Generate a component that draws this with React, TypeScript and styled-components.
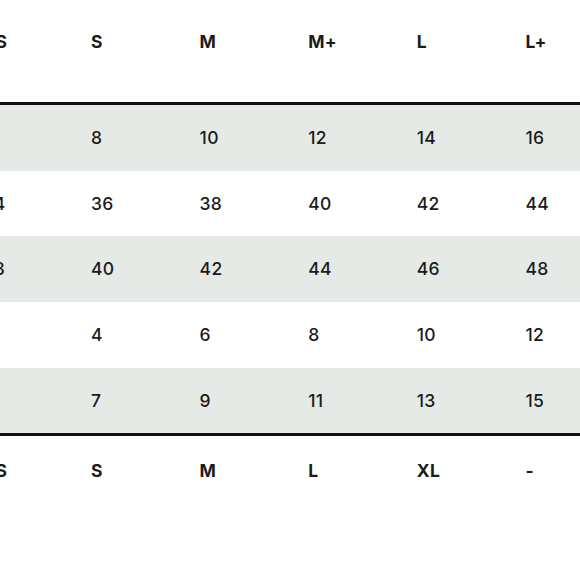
import styled, { createGlobalStyle } from 'styled-components';

const GlobalStyle = createGlobalStyle`
  html, body {
    margin: 0;
    padding: 0;
    background: #ffffff;
    overflow: hidden;
  }
  body {
    font-family: Inter, "Noto Sans", "Liberation Sans", sans-serif;
    color: #1b1b1b;
  }
`;

const Chart = styled.div`
  width: 652px;
  margin-left: -17.6px;
  display: flex;
  flex-direction: column;
`;

const Row = styled.div<{ $shade?: boolean; $rule?: boolean }>`
  display: grid;
  grid-template-columns: repeat(6, 108.6px);
  height: 65.7px;
  align-items: center;
  background: ${(p) => (p.$shade ? '#e6eae7' : '#ffffff')};
  border-bottom: ${(p) => (p.$rule ? '3px solid #111111' : 'none')};
`;

const HeadRow = styled(Row)`
  height: 105px;
  align-items: start;
  padding-top: 31px;
  box-sizing: border-box;
`;

const FootRow = styled(Row)`
  padding-top: 4px;
  box-sizing: border-box;
`;

const Cell = styled.div<{ $bold?: boolean }>`
  font-size: 17.5px;
  line-height: 22px;
  font-weight: ${(p) => (p.$bold ? 700 : 500)};
  letter-spacing: 0.3px;
`;

const sizes = ['XS', 'S', 'M', 'M+', 'L', 'L+'];
const rows = [
  ['6', '8', '10', '12', '14', '16'],
  ['34', '36', '38', '40', '42', '44'],
  ['38', '40', '42', '44', '46', '48'],
  ['2', '4', '6', '8', '10', '12'],
  ['5', '7', '9', '11', '13', '15'],
];
const intl = ['XS', 'S', 'M', 'L', 'XL', '-'];

export default function App() {
  return (
    <>
      <GlobalStyle />
      <Chart>
        <HeadRow $rule>
          {sizes.map((s) => (
            <Cell key={s} $bold>{s}</Cell>
          ))}
        </HeadRow>
        {rows.map((r, i) => (
          <Row key={i} $shade={i % 2 === 0} $rule={i === rows.length - 1}>
            {r.map((v, j) => (
              <Cell key={j}>{v}</Cell>
            ))}
          </Row>
        ))}
        <FootRow>
          {intl.map((s, j) => (
            <Cell key={j} $bold>{s}</Cell>
          ))}
        </FootRow>
      </Chart>
    </>
  );
}
